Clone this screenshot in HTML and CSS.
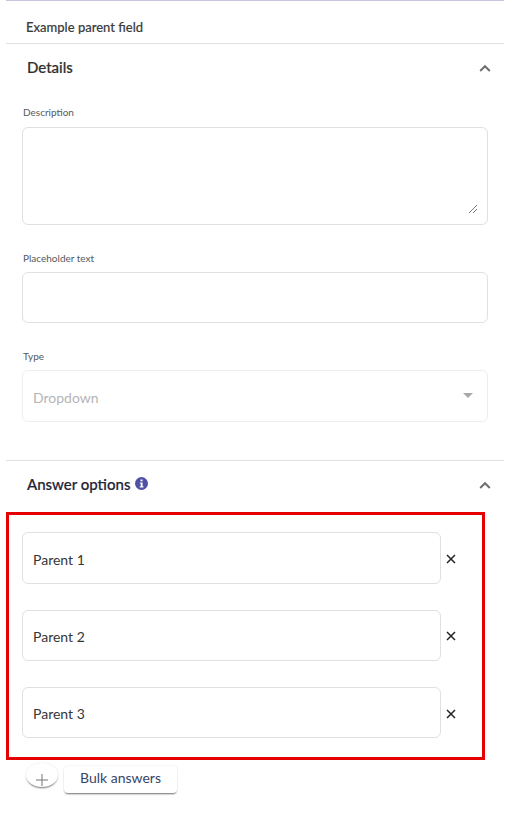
FILE: index.html
```html
<!DOCTYPE html>
<html lang="en">
<head>
<meta charset="utf-8">
<title>Example parent field</title>
<link rel="stylesheet" href="styles.css">
</head>
<body>
<main class="panel">
  <header class="field-title">Example parent field</header>
  <section class="details">
    <div class="section-head">
      <h2>Details</h2>
      <svg class="chevron" viewBox="0 0 12 8"><path d="M1.2 7 6 2.2 10.8 7"/></svg>
    </div>
    <label class="label label-desc">Description</label>
    <div class="box box-area">
      <svg class="grip" viewBox="0 0 10 10"><path d="M1 9 9 1M5 9 9 5"/></svg>
    </div>
    <label class="label label-ph">Placeholder text</label>
    <div class="box box-input"></div>
    <label class="label label-type">Type</label>
    <div class="box box-select">
      <span class="select-value">Dropdown</span>
      <svg class="caret" viewBox="0 0 10 5"><path d="M0 0h10L5 5z"/></svg>
    </div>
  </section>
  <section class="answers">
    <div class="section-head">
      <h2 class="answers-title">Answer options
        <svg class="info" viewBox="0 0 12 12"><circle cx="6" cy="6" r="6"/><rect x="5.1" y="2.2" width="1.9" height="1.8" rx=".4"/><path d="M4.5 5h2.5v3.6h.8v1H4.4v-1h.9V6h-.8z"/></svg>
      </h2>
      <svg class="chevron" viewBox="0 0 12 8"><path d="M1.2 7 6 2.2 10.8 7"/></svg>
    </div>
    <div class="highlight">
      <div class="option option-1">
        <div class="box box-option"><span>Parent 1</span></div>
        <svg class="remove" viewBox="0 0 10 10"><path d="M1 1l8 8M9 1 1 9"/></svg>
      </div>
      <div class="option option-2">
        <div class="box box-option"><span>Parent 2</span></div>
        <svg class="remove" viewBox="0 0 10 10"><path d="M1 1l8 8M9 1 1 9"/></svg>
      </div>
      <div class="option option-3">
        <div class="box box-option"><span>Parent 3</span></div>
        <svg class="remove" viewBox="0 0 10 10"><path d="M1 1l8 8M9 1 1 9"/></svg>
      </div>
    </div>
    <div class="actions">
      <button class="add" type="button" aria-label="Add">
        <svg viewBox="0 0 12 12"><path d="M6 0v12M0 6h12"/></svg>
      </button>
      <button class="bulk" type="button">Bulk answers</button>
    </div>
  </section>
</main>
</body>
</html>
```
FILE: styles.css
```css
* { box-sizing: border-box; }
html, body { margin: 0; padding: 0; background: #fff; }
body { font-family: Lato, "Noto Sans", sans-serif; color: #333; }
.panel {
  width: 498px;
  height: 838px;
  margin-left: 6px;
  border-top: 1px solid #c9c6e2;
}
.field-title {
  height: 43px;
  padding: 18px 0 0 20px;
  font-size: 13px;
  line-height: 17px;
  font-weight: 500;
  color: #3c3c3c;
  -webkit-text-stroke: 0.15px #3c3c3c;
  border-bottom: 1px solid #e0e0e0;
}
.details { height: 417px; padding: 0 16px; border-bottom: 1px solid #e0e0e0; }
.section-head {
  display: flex;
  justify-content: space-between;
  align-items: center;
  height: 48px;
  padding: 0 0 0 5px;
  margin-right: -3px;
}
.section-head h2 {
  margin: 0 0 2px;
  font-size: 15px;
  line-height: 20px;
  font-weight: 500;
  color: #2f2f2f;
  -webkit-text-stroke: 0.2px #2f2f2f;
}
.chevron { width: 12px; height: 8px; }
.chevron path { fill: none; stroke: #6f6f6f; stroke-width: 2; }
.label { display: block; padding-left: 1px; font-size: 10px; line-height: 14px; color: #55585c; }
.label-desc { margin-top: 13px; }
.label-ph { margin-top: 26px; }
.label-type { margin-top: 26px; }
.box { border: 1px solid #e0e0e0; border-radius: 6px; background: #fff; }
.box-area { position: relative; height: 98px; margin-top: 8px; }
.grip { position: absolute; right: 9px; bottom: 10px; width: 10px; height: 10px; }
.grip path { fill: none; stroke: #555; stroke-width: .8; }
.box-input { height: 51px; margin-top: 7px; }
.box-select {
  display: flex;
  justify-content: space-between;
  align-items: center;
  height: 52px;
  margin-top: 7px;
  padding: 0 14px 0 10px;
  border-color: #eeeeee;
}
.select-value { padding-top: 3px; font-size: 14px; line-height: 18px; color: #b5b5b5; }
.caret { width: 10px; height: 5px; margin-top: -1px; }
.caret path { fill: #a9a9a9; }
.answers .section-head { height: 47px; padding-left: 21px; margin-right: 3px; padding-right: 10px; }
.answers-title { display: flex; align-items: center; gap: 5px; color: #22223a !important; }
.info { width: 13px; height: 13px; }
.info circle { fill: #4f51a5; }
.info rect, .info path { fill: #fff; }
.highlight {
  width: 479px;
  height: 248px;
  margin-top: 4px;
  padding: 17px 0 0 13px;
  border: 3px solid #e60000;
}
.option { display: flex; align-items: center; }
.option-2 { margin-top: 26px; }
.option-3 { margin-top: 26px; }
.box-option {
  display: flex;
  align-items: center;
  width: 419px;
  height: 51px;
  padding: 2px 0 0 10px;
  font-size: 14px;
  color: #363636;
}
.option-1 .box-option { height: 52px; }
.remove { width: 10px; height: 10px; margin: 2px 0 0 5px; }
.option-2 .remove { margin-top: 0; }
.remove path { fill: none; stroke: #222; stroke-width: 1.5; }
.actions { display: flex; align-items: flex-start; gap: 6px; padding: 3px 0 0 20px; }
.add {
  display: flex;
  align-items: center;
  justify-content: center;
  width: 32px;
  height: 24px;
  padding: 9px 0 0;
  border: 0;
  border-radius: 50%;
  background: #fff;
  box-shadow: 0 2px 2px -1px rgba(0,0,0,.55), 0 0 2px rgba(0,0,0,.12);
}
.add svg { width: 12px; height: 12px; }
.add path { fill: none; stroke: #777; stroke-width: 1; }
.bulk {
  width: 113px;
  height: 27px;
  margin-top: 3px;
  padding: 0 0 4px;
  border: 0;
  border-radius: 4px;
  background: #fff;
  box-shadow: 0 2px 2px -1px rgba(0,0,0,.55), 0 0 2px rgba(0,0,0,.12);
  font: 14px/20px Lato, "Noto Sans", sans-serif;
  color: #35456b;
}
```
